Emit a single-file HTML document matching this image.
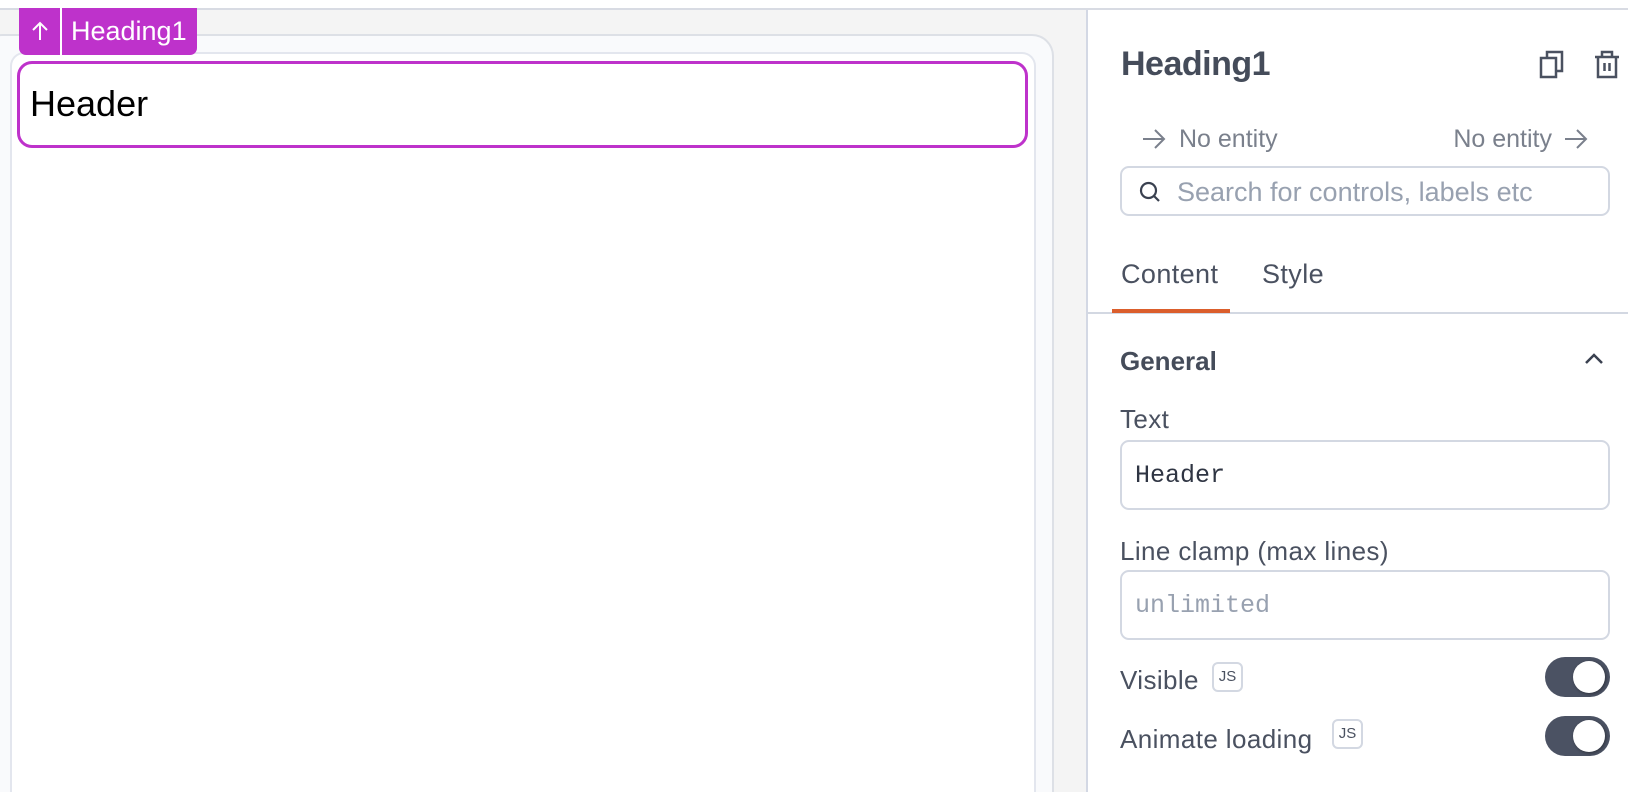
<!DOCTYPE html>
<html><head><meta charset="utf-8"><style>
*{box-sizing:border-box;margin:0;padding:0}
html,body{width:1628px;height:792px;overflow:hidden}
body{background:#fff;font-family:"Liberation Sans",sans-serif;position:relative}
#wrap{position:absolute;left:0;top:0;width:1628px;height:792px;overflow:hidden}
.abs{position:absolute}
.lbl{position:absolute;left:1120px;font-size:26px;letter-spacing:0.4px;color:#4a5160;line-height:1;white-space:nowrap}
.inp{position:absolute;left:1120px;width:490px;border:2px solid #d3d8e2;border-radius:9px;background:#fff}
.mono{font-family:"Liberation Mono",monospace;font-size:25px;position:absolute;left:13px;line-height:1}
.js{position:absolute;width:31px;height:30px;border:2px solid #d3d8e2;border-radius:6px;font-size:15px;color:#4a5160;text-align:center;line-height:26px}
.tog{position:absolute;left:1545px;width:65px;height:40px;border-radius:20px;background:#4b5263}
.tog::after{content:"";position:absolute;left:28px;top:4px;width:32px;height:32px;border-radius:50%;background:#fff;box-shadow:1px 1px 3px rgba(0,0,0,.4)}
</style></head><body><div id="wrap">
<div class="abs" style="left:0;top:8px;width:1628px;height:2px;background:#d8dbe3"></div>
<div class="abs" style="left:0;top:10px;width:1087px;height:782px;background:#f4f4f4"></div>
<div class="abs" style="left:-20px;top:34px;width:1074px;height:758px;border:2px solid #dde0e6;border-bottom:none;border-radius:22px 22px 0 0;background:#f9fafc"></div>
<div class="abs" style="left:10px;top:52px;width:1026px;height:740px;border:2px solid #e3e6ee;border-bottom:none;border-radius:14px 14px 0 0;background:#fff"></div>
<div class="abs" style="left:17px;top:61px;width:1011px;height:87px;border:3px solid #be32cb;border-radius:15px;background:#fff"></div>
<div class="abs" style="left:30px;top:86px;font-size:36px;color:#000;line-height:1">Header</div>
<div class="abs" style="left:19px;top:8px;width:178px;height:47px;background:#be32cb;border-radius:0 0 7px 7px"></div>
<div class="abs" style="left:60px;top:8px;width:2px;height:47px;background:#fff"></div>
<svg class="abs" style="left:28px;top:18px" width="24" height="26" viewBox="0 0 24 26"><path d="M12 22V5M5 12l7-7 7 7" stroke="#fff" stroke-width="2" fill="none"/></svg>
<div class="abs" style="left:71px;top:18px;font-size:27px;color:#fff;line-height:1">Heading1</div>
<div class="abs" style="left:1086px;top:10px;width:2px;height:782px;background:#d3d8e4"></div>
<div class="abs" style="left:1121px;top:47px;font-size:34px;font-weight:bold;color:#454c5a;line-height:1;letter-spacing:-0.5px">Heading1</div>
<svg class="abs" style="left:1538px;top:49px" width="28" height="32" viewBox="0 0 28 32"><rect x="3" y="9" width="15" height="19" fill="none" stroke="#4a5160" stroke-width="2.5"/><path d="M9 9V3h15v19h-6" fill="none" stroke="#4a5160" stroke-width="2.5"/></svg>
<svg class="abs" style="left:1593px;top:49px" width="28" height="32" viewBox="0 0 28 32"><path d="M2 8h24M9 8V3h10v5M5 8v20h18V8M11.5 14v8M16.5 14v8" fill="none" stroke="#4a5160" stroke-width="2.5"/></svg>
<svg class="abs" style="left:1141px;top:127px" width="26" height="24" viewBox="0 0 26 24"><path d="M2 12h21M14 3l9 9-9 9" fill="none" stroke="#7a808c" stroke-width="2"/></svg>
<div class="abs" style="left:1179px;top:127px;font-size:25px;color:#7a808c;line-height:1">No entity</div>
<div class="abs" style="right:76px;top:127px;font-size:25px;color:#7a808c;line-height:1">No entity</div>
<svg class="abs" style="left:1563px;top:127px" width="26" height="24" viewBox="0 0 26 24"><path d="M2 12h21M14 3l9 9-9 9" fill="none" stroke="#7a808c" stroke-width="2"/></svg>
<div class="inp" style="top:166px;height:50px"></div>
<svg class="abs" style="left:1138px;top:180px" width="24" height="24" viewBox="0 0 24 24"><circle cx="10.5" cy="10.5" r="7.5" fill="none" stroke="#3a4150" stroke-width="2.2"/><path d="M16 16l5 5" stroke="#3a4150" stroke-width="2.2"/></svg>
<div class="abs" style="left:1177px;top:179px;font-size:27px;color:#98a1b0;line-height:1">Search for controls, labels etc</div>
<div class="lbl" style="top:261px;font-size:27px;left:1121px">Content</div>
<div class="lbl" style="top:261px;font-size:27px;left:1262px">Style</div>
<div class="abs" style="left:1087px;top:312px;width:541px;height:2px;background:#d3d8e2"></div>
<div class="abs" style="left:1112px;top:309px;width:118px;height:4px;background:#db5e2c"></div>
<div class="lbl" style="top:348px;font-weight:bold;color:#454c5a;letter-spacing:0">General</div>
<svg class="abs" style="left:1583px;top:350px" width="22" height="16" viewBox="0 0 22 16"><path d="M3 13l8-8 8 8" fill="none" stroke="#3a4150" stroke-width="2.5"/></svg>
<div class="lbl" style="top:406px">Text</div>
<div class="inp" style="top:440px;height:70px"><div class="mono" style="top:21px;color:#2f3543">Header</div></div>
<div class="lbl" style="top:538px">Line clamp (max lines)</div>
<div class="inp" style="top:570px;height:70px"><div class="mono" style="top:21px;color:#98a1b0">unlimited</div></div>
<div class="lbl" style="top:667px">Visible</div>
<div class="js" style="left:1212px;top:662px">JS</div>
<div class="tog" style="top:657px"></div>
<div class="lbl" style="top:726px">Animate loading</div>
<div class="js" style="left:1332px;top:719px">JS</div>
<div class="tog" style="top:716px"></div>
</div></body></html>
